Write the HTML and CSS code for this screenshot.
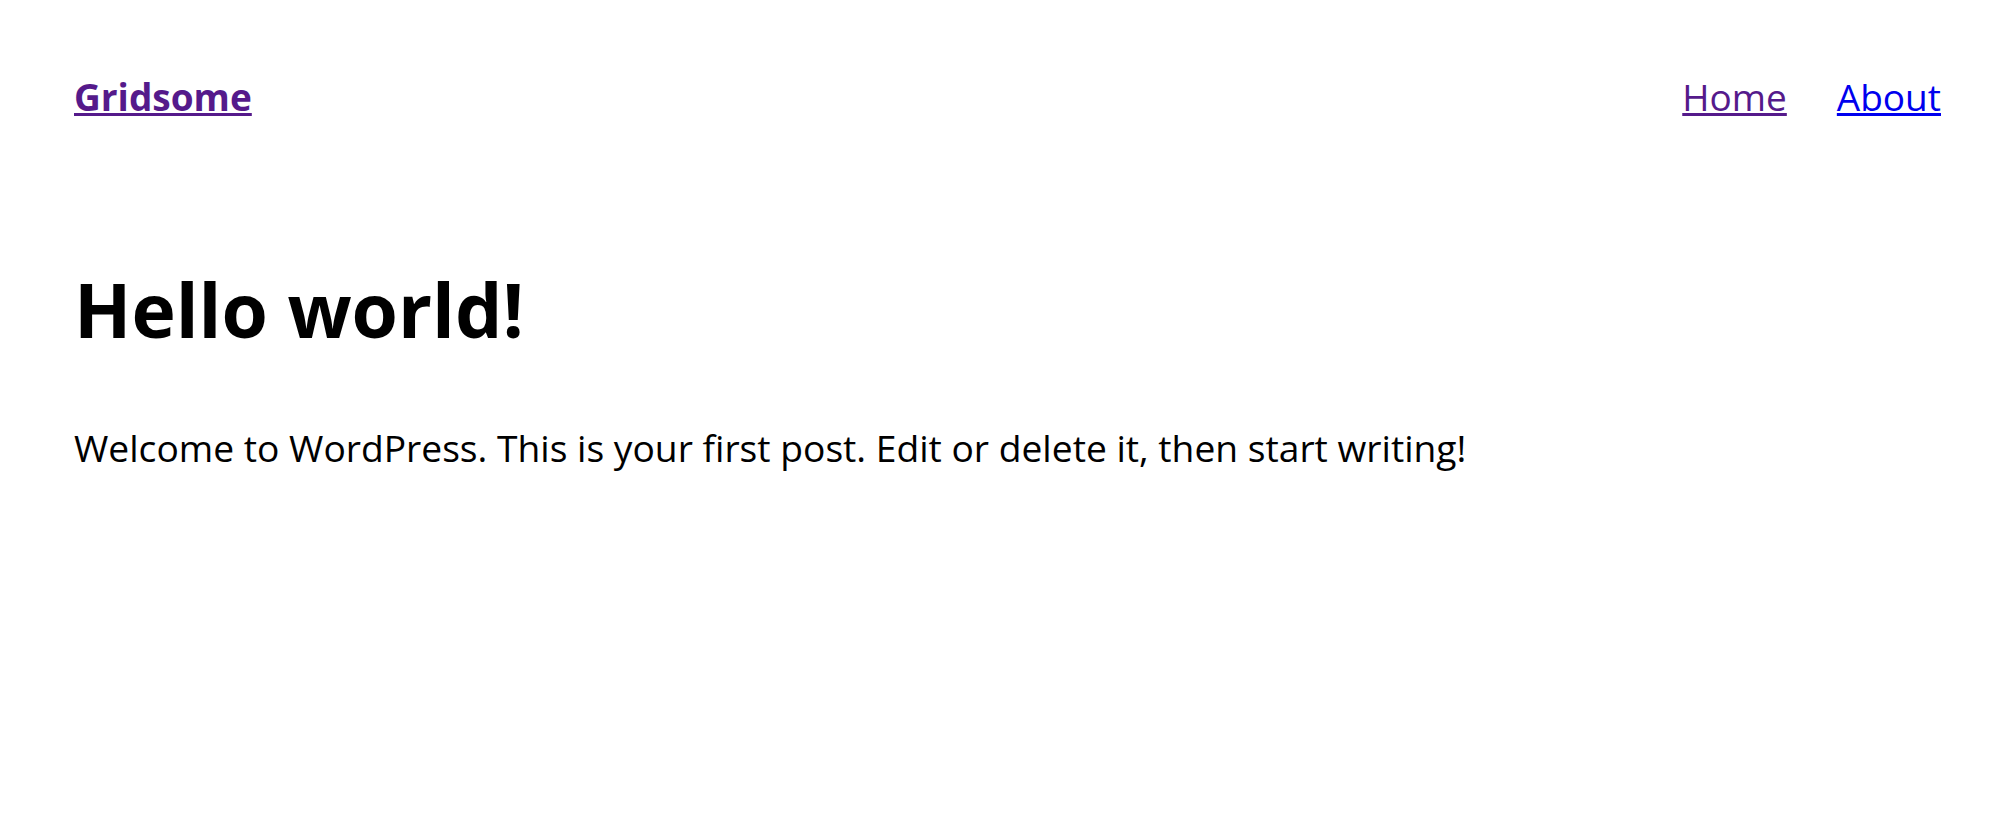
FILE: index.html
```html
<!DOCTYPE html>
<html lang="en">
<head>
<meta charset="utf-8">
<title>Gridsome</title>
<link rel="stylesheet" href="styles.css">
</head>
<body>
<div class="layout">
  <header class="header">
    <a class="brand" href="#"><strong>Gridsome</strong></a>
    <nav class="nav">
      <a class="nav__link visited" href="#">Home</a>
      <a class="nav__link" href="#about">About</a>
    </nav>
  </header>
  <main class="content">
    <h1 class="title">Hello world!</h1>
    <p class="text">Welcome to WordPress. This is your first post. Edit or delete it, then start writing!</p>
  </main>
</div>
</body>
</html>
```
FILE: styles.css
```css
html, body {
  margin: 0;
  padding: 0;
  background: #ffffff;
}
body {
  font-family: "Open Sans", "Noto Sans", sans-serif;
  color: #000000;
}
.layout {
  padding: 70px 59px 0 74px;
}
.header {
  display: flex;
  justify-content: space-between;
  align-items: baseline;
  font-size: 37px;
  line-height: 54px;
}
.brand {
  color: #551a8b;
}
.nav {
  display: flex;
  gap: 50px;
}
.nav__link {
  color: #0000ee;
}
.nav__link.visited {
  color: #551a8b;
}
.content {
  margin-top: 141px;
}
.title {
  margin: 0 0 68px;
  font-size: 75px;
  line-height: 88px;
  font-weight: 700;
}
.text {
  margin: 0;
  font-size: 37.2px;
  line-height: 54px;
}
```
